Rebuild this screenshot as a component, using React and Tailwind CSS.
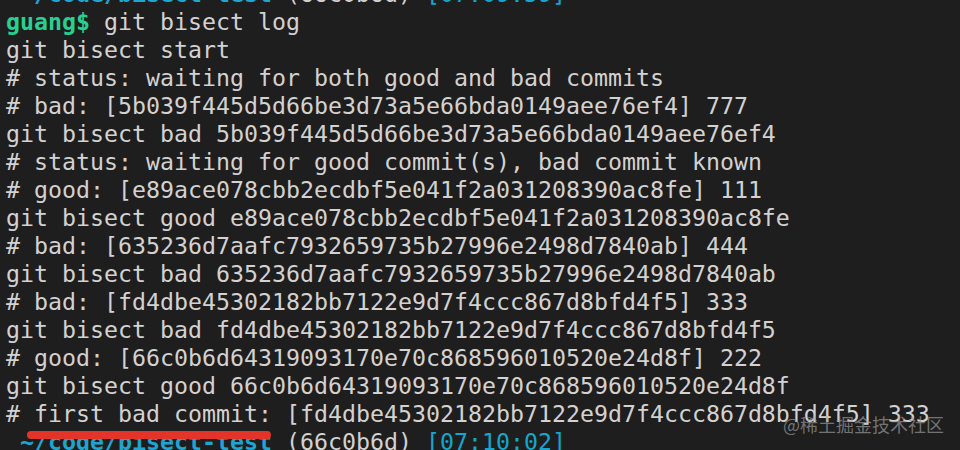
import React from 'react';

const logLines = [
  'git bisect start',
  '# status: waiting for both good and bad commits',
  '# bad: [5b039f445d5d66be3d73a5e66bda0149aee76ef4] 777',
  'git bisect bad 5b039f445d5d66be3d73a5e66bda0149aee76ef4',
  '# status: waiting for good commit(s), bad commit known',
  '# good: [e89ace078cbb2ecdbf5e041f2a031208390ac8fe] 111',
  'git bisect good e89ace078cbb2ecdbf5e041f2a031208390ac8fe',
  '# bad: [635236d7aafc7932659735b27996e2498d7840ab] 444',
  'git bisect bad 635236d7aafc7932659735b27996e2498d7840ab',
  '# bad: [fd4dbe45302182bb7122e9d7f4ccc867d8bfd4f5] 333',
  'git bisect bad fd4dbe45302182bb7122e9d7f4ccc867d8bfd4f5',
  '# good: [66c0b6d64319093170e70c868596010520e24d8f] 222',
  'git bisect good 66c0b6d64319093170e70c868596010520e24d8f',
  '# first bad commit: [fd4dbe45302182bb7122e9d7f4ccc867d8bfd4f5] 333',
];

const PromptLine = ({ time }) => (
  <div className="whitespace-pre">
    {' '}
    <span className="font-bold text-[#1ea5d2]">~/code/bisect-test</span>
    {' (66c0b6d) '}
    <span className="text-[#14a6d0]">[{time}]</span>
  </div>
);

const App = () => {
  return (
    <div className="relative w-[960px] h-[450px] overflow-hidden bg-[#1e1e1e]">
      {/* Terminal output */}
      <div className="-mt-[20px] pl-[6px] font-['DejaVu_Sans_Mono',monospace] text-[23.25px] leading-[28px] text-[#d2d2d2]">
        <PromptLine time="07:09:59" />
        <div className="whitespace-pre">
          <span className="font-bold text-[#27d08e]">guang$</span> git bisect log
        </div>
        {logLines.map((line, i) => (
          <div key={i} className="whitespace-pre">{line}</div>
        ))}
        <PromptLine time="07:10:02" />
      </div>

      {/* Red annotation underline */}
      <div className="absolute left-[27px] top-[431px] w-[244px] h-[8px] rounded-full bg-[#e3342a]"></div>

      {/* Watermark */}
      <div className="absolute right-[16px] top-[411px] font-['Noto_Sans_CJK_SC',sans-serif] text-[18px] leading-[26px] text-[#9a9a9a]/70">
        @稀土掘金技术社区
      </div>
    </div>
  );
};

export default App;
